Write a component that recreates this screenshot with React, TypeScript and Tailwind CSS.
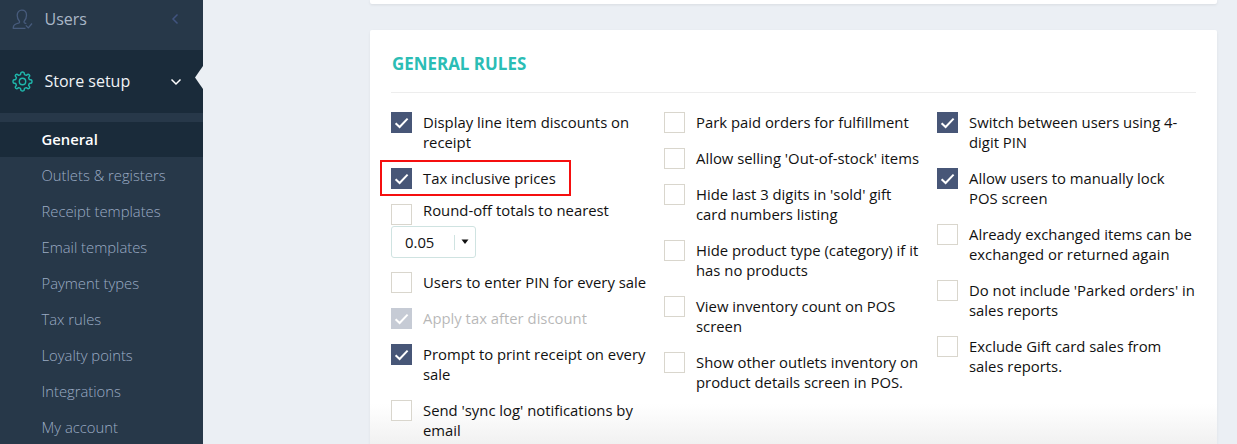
import React from "react";

type Rule = { lines: string[]; on?: boolean; disabled?: boolean; marked?: boolean };

const colA: Rule[] = [
  { lines: ["Display line item discounts on", "receipt"], on: true },
  { lines: ["Tax inclusive prices"], on: true, marked: true },
];
const colA2: Rule[] = [
  { lines: ["Users to enter PIN for every sale"] },
  { lines: ["Apply tax after discount"], on: true, disabled: true },
  { lines: ["Prompt to print receipt on every", "sale"], on: true },
  { lines: ["Send 'sync log' notifications by", "email"] },
];
const colB: Rule[] = [
  { lines: ["Park paid orders for fulfillment"] },
  { lines: ["Allow selling 'Out-of-stock' items"] },
  { lines: ["Hide last 3 digits in 'sold' gift", "card numbers listing"] },
  { lines: ["Hide product type (category) if it", "has no products"] },
  { lines: ["View inventory count on POS", "screen"] },
  { lines: ["Show other outlets inventory on", "product details screen in POS."] },
];
const colC: Rule[] = [
  { lines: ["Switch between users using 4-", "digit PIN"], on: true },
  { lines: ["Allow users to manually lock", "POS screen"], on: true },
  { lines: ["Already exchanged items can be", "exchanged or returned again"] },
  { lines: ["Do not include 'Parked orders' in", "sales reports"] },
  { lines: ["Exclude Gift card sales from", "sales reports."] },
];
const menu = [
  "Outlets & registers",
  "Receipt templates",
  "Email templates",
  "Payment types",
  "Tax rules",
  "Loyalty points",
  "Integrations",
  "My account",
];

function Box({ on, className = "" }: { on?: boolean; className?: string }) {
  return on ? (
    <span className={`flex h-[21px] w-[21px] shrink-0 items-center justify-center bg-[#475677] ${className}`}>
      <svg width="21" height="21" viewBox="0 0 21 21" fill="none" stroke="#fff" strokeWidth="2">
        <path d="M4.600 11.200 8.600 15 16.600 6.600" />
      </svg>
    </span>
  ) : (
    <span className={`h-[21px] w-[21px] shrink-0 border border-[#d9d6cd] bg-white ${className}`} />
  );
}

function Item({ rule }: { rule: Rule }) {
  return (
    <div className={`relative flex items-start gap-[11px] ${rule.disabled ? "opacity-30" : ""}`}>
      {rule.marked && <div className="absolute -top-[9px] -left-[11px] h-[36px] w-[191px] border-2 border-[#f50f0f]" />}
      <Box on={rule.on} className="-mt-px -mb-px" />
      <div className="-mt-px mb-px">
        {rule.lines.map((l) => (
          <div key={l} className="whitespace-nowrap">{l}</div>
        ))}
      </div>
    </div>
  );
}

function Gear() {
  return (
    <svg className="ml-3 shrink-0" width="21" height="21" viewBox="0 0 21 21" fill="none" stroke="#1fb8ac" strokeWidth="1.4" strokeLinejoin="round">
      <path d="M9 1.500Q10.500.500 12 1.500L12.500 3.700 14.300 4.400 16.200 3.200Q17.600 3.400 17.800 4.800L16.600 6.700 17.300 8.500 19.500 9Q20.500 10.500 19.500 12L17.300 12.500 16.600 14.300 17.800 16.200Q17.600 17.600 16.200 17.800L14.300 16.600 12.500 17.300 12 19.500Q10.500 20.500 9 19.500L8.500 17.300 6.700 16.600 4.800 17.800Q3.400 17.600 3.200 16.200L4.400 14.300 3.700 12.500 1.500 12Q.500 10.500 1.500 9L3.700 8.500 4.400 6.700 3.200 4.800Q3.400 3.400 4.800 3.200L6.700 4.400 8.500 3.700z" />
      <circle cx="10.500" cy="10.500" r="3.200" />
    </svg>
  );
}

function UserCheck() {
  return (
    <svg className="ml-3 shrink-0" width="21" height="21" viewBox="0 0 21 21" fill="none" stroke="#475b7c" strokeWidth="1.3" strokeLinejoin="round">
      <path d="M13.500 19.300H1.200c0-2.600.8-3.600 2.700-4.300l3.200-1.200c.6-.3.6-1.200.2-1.800C6 10.500 5.200 8.500 5.200 6.200 5.200 3.200 7 1.200 9.800 1.200s4.700 2 4.700 5c0 2.300-.8 4.300-2.200 5.800-.4.600-.4 1.500.2 1.800l1.800.8" />
      <path d="M13.800 16.400l2.500 2.500 3.700-4.400" />
    </svg>
  );
}

export default function App() {
  return (
    <div className="flex h-[444px] w-full overflow-hidden bg-[#ebeff4] font-['Open_Sans',sans-serif]">
      <aside className="flex w-[202.500px] shrink-0 flex-col bg-[#273849] text-[16px]">
        <div className="flex h-[50px] shrink-0 items-center pb-[12px] text-[#a9b7c7]">
          <UserCheck />
          <span className="ml-[11.500px] flex-1">Users</span>
          <svg className="mr-[24px]" width="8" height="12" viewBox="0 0 8 12" fill="none" stroke="#41547f" strokeWidth="1.5"><path d="M6.500 1.500 2 6l4.500 4.500" /></svg>
        </div>
        <div className="relative flex h-[63px] shrink-0 items-center bg-[#1a2b3a] text-[#f0f3f6]">
          <Gear />
          <span className="mb-[2px] ml-[11.500px] flex-1">Store setup</span>
          <svg className="mr-[21px]" width="12" height="8" viewBox="0 0 12 8" fill="none" stroke="#fff" strokeWidth="1.500"><path d="M1.500 1.500 6 6l4.500-4.500" /></svg>
          <svg className="absolute top-[16px] right-0" width="8" height="23" viewBox="0 0 8 23" fill="#ebeff4"><path d="M8 0 0 11.500 8 23z" /></svg>
        </div>
        <div className="mt-[9px] flex h-[35px] shrink-0 items-center bg-[#1a2b3a] pl-[41.500px] text-[14.800px] font-semibold text-white">General</div>
        <nav className="shrink-0 text-[14.800px] leading-[36px] font-light text-[#9babc4]">
          {menu.map((m) => <div key={m} className="h-[36px] pl-[41.500px] whitespace-nowrap">{m}</div>)}
        </nav>
      </aside>
      <main className="flex flex-1 flex-col pl-[167.500px]">
        <div className="h-[4px] w-[847px] shrink-0 rounded-b-[2px] bg-white shadow-[0_1px_3px_rgba(0,0,0,0.08)]" />
        <section className="mt-[26px] h-[440px] w-[847px] shrink-0 rounded-t-[2px] bg-[linear-gradient(#fff_374px,#f1f1f1_414px)] px-[21px] shadow-[0_1px_3px_rgba(0,0,0,0.06)]">
          <h2 className="flex h-[63px] items-center border-b border-[#ededed] pt-[5px] pl-px text-[16.950px] font-bold text-[#2bbdb5]">GENERAL RULES</h2>
          <div className="flex pt-[20px] text-[14.850px] leading-[20px] text-[#111]">
            <div className="flex w-[273px] flex-col">
              <div className="flex flex-col gap-[16px]">{colA.map((r) => <Item key={r.lines[0]} rule={r} />)}</div>
              <div className="mt-[12px] flex gap-[11px]">
                <Box className="mt-[3px]" />
                <span className="-mt-px whitespace-nowrap">Round-off totals to nearest</span>
              </div>
              <div className="mt-px flex h-[32px] w-[85px] items-center rounded-[3px] border border-[#cfe3e1] bg-white pl-[13px]">
                <span className="flex-1">0.05</span>
                <span className="h-[15px] w-px bg-[#cfe3e1]" />
                <svg className="mr-[6px] ml-[6px]" width="8" height="6" viewBox="0 0 8 6"><path d="M.5.500h7L4 5z" fill="#111" /></svg>
              </div>
              <div className="mt-[15px] flex flex-col gap-[16px]">{colA2.map((r) => <Item key={r.lines[0]} rule={r} />)}</div>
            </div>
            <div className="flex w-[273px] flex-col gap-[16px]">{colB.map((r) => <Item key={r.lines[0]} rule={r} />)}</div>
            <div className="flex flex-col gap-[16px]">{colC.map((r) => <Item key={r.lines[0]} rule={r} />)}</div>
          </div>
        </section>
      </main>
    </div>
  );
}
